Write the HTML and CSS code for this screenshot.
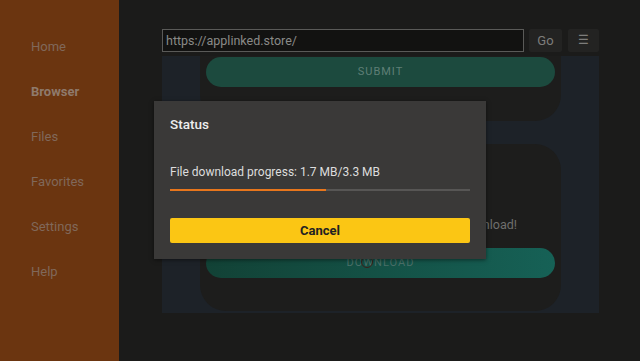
FILE: index.html
```html
<!DOCTYPE html>
<html lang="en">

<head>
    <meta charset="UTF-8">
    <meta name="viewport" content="width=device-width, initial-scale=1.0">
    <title>Downloader</title>
    <link rel="stylesheet" href="styles.css">
</head>

<body>
    <div class="app">
        <nav class="sidebar">
            <div class="nav-item">Home</div>
            <div class="nav-item active">Browser</div>
            <div class="nav-item">Files</div>
            <div class="nav-item">Favorites</div>
            <div class="nav-item">Settings</div>
            <div class="nav-item">Help</div>
        </nav>

        <main class="main">
            <div class="toolbar">
                <div class="url-box">https://applinked.store/</div>
                <div class="tool-btn go-btn">Go</div>
                <div class="tool-btn menu-btn">&#9776;</div>
            </div>

            <div class="webview">
                <div class="card card-top">
                    <div class="pill submit">SUBMIT</div>
                </div>
                <div class="card card-bottom">
                    <div class="card-note">Click to download!</div>
                    <div class="pill download">DOWNLOAD<span class="spinner"></span></div>
                </div>
            </div>
        </main>
    </div>

    <div class="dialog">
        <div class="dialog-title">Status</div>
        <div class="dialog-text">File download progress: 1.7 MB/3.3 MB</div>
        <div class="progress">
            <div class="progress-fill" style="width: 52%;"></div>
        </div>
        <div class="cancel-btn">Cancel</div>
    </div>
</body>

</html>
```

FILE: styles.css
```css
html {
    background-color: #1b1b1a;
    font-family: Roboto, "Noto Sans", Arial, sans-serif;
}

body {
    margin: 0;
    width: 640px;
    height: 361px;
    overflow: hidden;
    position: relative;
}

.app {
    display: flex;
    height: 361px;
}

.sidebar {
    width: 119px;
    flex-shrink: 0;
    background-color: #6b3510;
    padding-top: 38px;
    box-sizing: border-box;
}

.nav-item {
    height: 45px;
    padding-left: 31px;
    font-size: 13px;
    line-height: 18px;
    color: #80685a;
}

.nav-item.active {
    font-weight: bold;
    color: #8f7a6c;
}

.main {
    flex: 1;
    padding: 29px 42px 0 43px;
    display: flex;
    flex-direction: column;
}

.toolbar {
    display: flex;
    height: 23px;
}

.url-box {
    width: 362px;
    box-sizing: border-box;
    border: 1px solid #5a5a58;
    background-color: #121211;
    color: #8a8a88;
    font-size: 12.5px;
    line-height: 21px;
    padding-left: 3px;
}

.tool-btn {
    background-color: #232322;
    color: #7d7d7b;
    font-size: 13px;
    text-align: center;
    line-height: 23px;
    border-radius: 2px;
}

.go-btn {
    width: 33px;
    margin-left: 5px;
}

.menu-btn {
    width: 31px;
    margin-left: 6px;
    font-size: 12px;
}

.webview {
    margin-top: 4px;
    height: 257px;
    background-color: #1d2228;
    padding: 0 38px;
    display: flex;
    flex-direction: column;
}

.card {
    background-color: #1d1d1c;
    padding: 0 6px;
}

.card-top {
    height: 64px;
    border-radius: 0 0 26px 26px;
    padding-top: 1px;
}

.card-bottom {
    margin-top: 23px;
    height: 167px;
    border-radius: 26px;
    padding-top: 73px;
    box-sizing: border-box;
}

.pill {
    height: 30px;
    border-radius: 15px;
    color: #5f7f76;
    font-size: 11px;
    letter-spacing: 1px;
    text-align: center;
    line-height: 30px;
}

.submit {
    background-color: #1c4a3e;
}

.card-note {
    text-align: right;
    color: #6f6f6d;
    font-size: 12.5px;
    padding-right: 38px;
    height: 24px;
    line-height: 16px;
}

.download {
    margin-top: 7px;
    background: linear-gradient(to right, #124236, #166156);
    color: #4a6f68;
    position: relative;
}

.spinner {
    position: absolute;
    left: 155px;
    top: 8px;
    width: 10px;
    height: 10px;
    border: 1.5px solid #3a1f1a;
    border-radius: 50%;
}

.dialog {
    position: absolute;
    left: 154px;
    top: 101px;
    width: 332px;
    height: 158px;
    background-color: #3a3938;
    box-sizing: border-box;
    padding: 15px 16px 0 16px;
    box-shadow: 0 1px 4px rgba(0, 0, 0, 0.5);
}

.dialog-title {
    color: #eeeeee;
    font-size: 13.5px;
    font-weight: 500;
    line-height: 16px;
}

.dialog-text {
    margin-top: 32px;
    color: #dddddd;
    font-size: 12px;
    line-height: 16px;
}

.progress {
    margin-top: 9px;
    height: 2px;
    background-color: #575655;
}

.progress-fill {
    height: 2px;
    background-color: #e8761c;
}

.cancel-btn {
    margin-top: 27px;
    height: 25px;
    background-color: #fbc614;
    border-radius: 2px;
    text-align: center;
    color: #222222;
    font-size: 13px;
    font-weight: bold;
    line-height: 26px;
}
```
